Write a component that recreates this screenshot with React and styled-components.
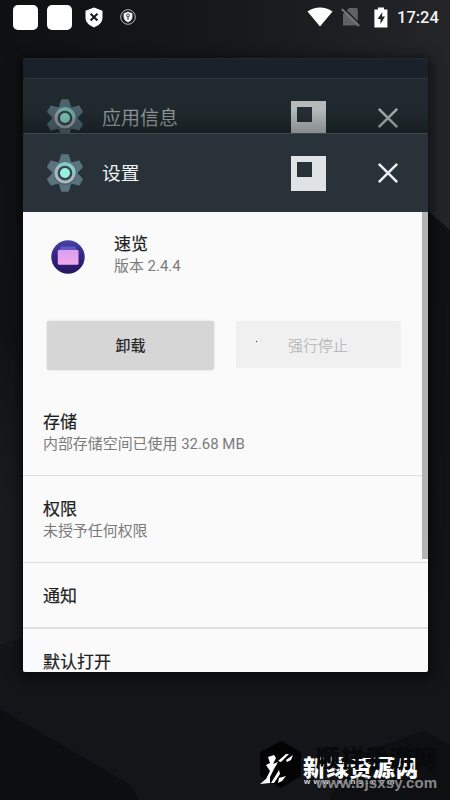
import React from "react";
import styled, { createGlobalStyle } from "styled-components";

const Global = createGlobalStyle`
  * { box-sizing: border-box; }
  html, body { margin: 0; padding: 0; background: #101114; }
  body { font-family: Roboto, "Noto Sans CJK SC", sans-serif; }
  svg { display: block; flex: none; }
`;

const Screen = styled.main`
  position: relative;
  width: 450px;
  height: 800px;
  overflow: hidden;
  display: flex;
  flex-direction: column;
  background: #111316;
`;

const Wallpaper = styled.svg`
  position: absolute;
  inset: 0;
`;

const StatusBar = styled.header`
  position: relative;
  height: 57.5px;
  padding: 4px 11px 0 13px;
  display: flex;
  align-items: flex-start;
  justify-content: space-between;
`;

const StatusGroup = styled.div`
  height: 26px;
  display: flex;
  align-items: center;
`;

const AppSquare = styled.span`
  width: 25px;
  height: 25px;
  margin-right: 9px;
  border-radius: 5px;
  background: #fff;
`;

const StatusIcon = styled.svg`
  margin-left: ${(p) => p.$gap || 0}px;
`;

const Clock = styled.time`
  width: 42px;
  margin-left: 9px;
  padding-top: 1px;
  color: #f4f4f4;
  font-size: 16.5px;
  font-weight: 500;
  line-height: 26px;
  white-space: nowrap;
`;

const Stack = styled.section`
  position: relative;
  width: 405px;
  margin: 0 22px 0 22.5px;
  display: flex;
  flex-direction: column;
  box-shadow: 0 3px 12px 4px rgba(0, 0, 0, 0.5);
  border-radius: 2px;
`;

const Card = styled.article`
  height: ${(p) => p.$height}px;
  overflow: hidden;
  background: ${(p) => p.$color};
  border-top: 1px solid ${(p) => p.$edge};
  border-radius: ${(p) => (p.$front ? "2px" : "2px 2px 0 0")};
  position: relative;
`;

const Shade = styled.div`
  position: absolute;
  inset: 0;
  background: linear-gradient(rgba(0, 0, 0, 0) 55%, rgba(0, 0, 0, 0.25));
`;

const CardHeader = styled.div`
  height: 78px;
  padding: 0 29px 0 24px;
  display: flex;
  align-items: center;
  opacity: ${(p) => (p.$dim ? 0.78 : 1)};
`;

const CardTitle = styled.h2`
  flex: 1;
  margin: 2px 0 0 19.5px;
  color: ${(p) => (p.$dim ? "#b4babd" : "#f2f5f6")};
  font-size: ${(p) => (p.$dim ? 19 : 18.7)}px;
  font-weight: 400;
  line-height: 28px;
`;

const PinButton = styled.button`
  width: 34.5px;
  height: 35px;
  margin-right: 51px;
  padding: 6px 0 0 6px;
  display: flex;
  align-items: flex-start;
  border: 0;
  background: #dfe3e5;
`;

const PinHole = styled.span`
  width: 15px;
  height: 15px;
  background: #273138;
`;

const Body = styled.div`
  position: relative;
  height: 460px;
  background: #fafafa;
  overflow: hidden;
`;

const Scrollbar = styled.div`
  position: absolute;
  top: 0;
  right: 0;
  width: 5.5px;
  height: 347px;
  background: #b3b3b3;
`;

const AppInfo = styled.div`
  height: 109px;
  padding: 20px 0 0 28px;
  display: flex;
  gap: 29.5px;
`;

const AppIcon = styled.svg`
  margin-top: 8px;
`;

const Title = styled.h3`
  margin: 0;
  color: #202020;
  font-size: 17px;
  font-weight: 400;
  -webkit-text-stroke: 0.2px #202020;
  line-height: 25px;
`;

const Subtitle = styled.p`
  margin: 0;
  color: #7a7a7a;
  font-size: 14.95px;
  line-height: 19px;
`;

const Actions = styled.div`
  height: 81px;
  padding: 0 26px 0 24.5px;
  display: flex;
  gap: 22px;
  align-items: flex-start;
`;

const Action = styled.button`
  position: relative;
  width: ${(p) => (p.$off ? 165 : 167)}px;
  height: ${(p) => (p.$off ? 47 : 49)}px;
  padding: ${(p) => (p.$off ? "2px 1px 0 0" : "1px 0 0")};
  border: 0;
  border-radius: 2px;
  background: ${(p) => (p.$off ? "#f0f0f0" : "#d6d6d6")};
  box-shadow: ${(p) => (p.$off ? "none" : "0 0 2px rgba(0,0,0,0.18)")};
  color: ${(p) => (p.$off ? "#bcbcbc" : "#282828")};
  font: ${(p) => (p.$off ? 400 : 500)} 15px/24px Roboto, "Noto Sans CJK SC", sans-serif;
`;

const Speck = styled.i`
  position: absolute;
  left: 20px;
  top: 20px;
  width: 1px;
  height: 1px;
  background: #333;
`;

const Row = styled.div`
  height: ${(p) => p.$height}px;
  padding: ${(p) => p.$top}px 0 0 20.5px;
  border-bottom: ${(p) => p.$line || 1}px solid #dedede;
`;

const Watermark = styled.div`
  position: absolute;
  left: 257px;
  top: 738px;
  width: 188px;
  height: 60px;
`;

const WatermarkLogo = styled.svg`
  position: absolute;
  left: 0;
  top: 0;
`;

const WatermarkText = styled.span`
  position: absolute;
  left: ${(p) => p.$x}px;
  top: ${(p) => p.$y}px;
  color: ${(p) => p.$color};
  font-family: "Liberation Sans", "Noto Sans CJK SC", sans-serif;
  font-size: ${(p) => p.$size}px;
  font-weight: ${(p) => p.$weight || 700};
  letter-spacing: ${(p) => p.$spacing || 0}px;
  line-height: 1.2;
  white-space: nowrap;
`;

function Gear() {
  return (
    <svg width="36" height="38" viewBox="0 0 36 38">
      <g fill="#5a737e">
        {[0, 60, 120, 180, 240, 300].map((a) => (
          <path key={a} d="M14.6 0.8h6.8l2.4 8h-11.6z" transform={`rotate(${a} 18 19)`} stroke="#5a737e" strokeLinejoin="round" />
        ))}
        <circle cx="18" cy="19" r="12.6" />
      </g>
      <circle cx="18" cy="20" r="11" fill="#48606b" />
      <circle cx="18" cy="19" r="9" fill="#37474f" stroke="#a9b7c1" strokeWidth="3.2" />
      <path d="M12.2 12.1A9 9 0 0 1 27 19" fill="none" stroke="#83cfc8" strokeWidth="3.2" />
      <circle cx="18" cy="19" r="5" fill="#96f1df" />
    </svg>
  );
}

function Close({ dim }) {
  return (
    <svg width="22" height="22" viewBox="0 0 22 22">
      <path d="M1.8 1.8l18.4 18.4M20.2 1.8L1.8 20.2" stroke={dim ? "#ccd0d2" : "#e8ecee"} strokeWidth="2.6" />
    </svg>
  );
}

function TaskHeader({ title, dim }) {
  return (
    <CardHeader $dim={dim}>
      <Gear />
      <CardTitle $dim={dim}>{title}</CardTitle>
      <PinButton aria-label="pin">
        <PinHole />
      </PinButton>
      <Close dim={dim} />
    </CardHeader>
  );
}

export default function App() {
  return (
    <Screen>
      <Global />
      <Wallpaper width="450" height="800" viewBox="0 0 450 800">
        <defs>
          <linearGradient id="base" x1="0" y1="0" x2="1" y2="0">
            <stop offset="0" stopColor="#0f1011" />
            <stop offset="0.5" stopColor="#17181a" />
            <stop offset="1" stopColor="#242529" />
          </linearGradient>
          <linearGradient id="lower" x1="0" y1="0" x2="0" y2="1">
            <stop offset="0" stopColor="#0e1012" />
            <stop offset="0.75" stopColor="#121416" />
            <stop offset="1" stopColor="#15161a" />
          </linearGradient>
          <linearGradient id="side" x1="0" y1="0" x2="0" y2="1">
            <stop offset="0" stopColor="#191b1d" stopOpacity="0" />
            <stop offset="0.6" stopColor="#191b1d" />
          </linearGradient>
        </defs>
        <path d="M0 0h450v800H0z" fill="url(#base)" />
        <path d="M0 165L22 200H415L450 230V800H0z" fill="url(#lower)" />
        <path d="M0 330h22v308L0 645z" fill="url(#side)" />
        <path d="M0 645l22-7 200 34h228v128H0z" fill="#131518" />
        <path d="M0 709l131 76 8 15H0z" fill="#0d0e10" />
        <path d="M345 760l78-29 27 14v55H330z" fill="#0e0f11" />
      </Wallpaper>
      <StatusBar>
        <StatusGroup>
          <AppSquare />
          <AppSquare />
          <StatusIcon $gap={3} width="20" height="21" viewBox="0 0 20 21">
            <path d="M10 0.5l8.5 3.3v6.8c0 4.7-3.6 8-8.5 9.9-4.9-1.9-8.5-5.2-8.5-9.9V3.8z" fill="#fff" />
            <path d="M6.6 6.7l6.8 6.8M13.4 6.7l-6.8 6.8" stroke="#17191b" strokeWidth="2" />
          </StatusIcon>
          <StatusIcon $gap={15} width="18" height="18" viewBox="0 0 18 18">
            <circle cx="9" cy="9" r="7.3" fill="#17191b" stroke="#b9b9b9" strokeWidth="1" />
            <path d="M9 3.7l4.4 1.5v3.7c0 2.6-2 4.3-4.4 5.4-2.4-1.1-4.4-2.8-4.4-5.4V5.2z" fill="#f3f3f3" />
            <circle cx="9" cy="7.4" r="1.5" fill="#ddd" stroke="#333" strokeWidth="0.8" />
            <path d="M9 9v2.7" stroke="#333" strokeWidth="1" />
          </StatusIcon>
        </StatusGroup>
        <StatusGroup>
          <StatusIcon width="26" height="20" viewBox="0 0 26 20">
            <path d="M0.5 4.6C8-1 18-1 25.5 4.6L13 19.5z" fill="#fff" />
          </StatusIcon>
          <StatusIcon $gap={8} width="20" height="20" viewBox="0 0 20 20">
            <path d="M8 1h7q1.8 0 1.8 1.8V18.5H2V7z" fill="#606164" />
            <path d="M2.2 0.8l17.4 17" stroke="#1b1c1e" strokeWidth="1.4" />
            <path d="M0.8 2l17.4 17" stroke="#77787b" strokeWidth="1.8" />
          </StatusIcon>
          <StatusIcon $gap={13} width="14" height="21" viewBox="0 0 14 21">
            <path d="M4 0.5h6v2h3.4V20.5H0.4V2.5H4z" fill="#fff" />
            <path d="M8.4 5L3.5 12h3v5L11 9.6H8z" fill="#222427" />
          </StatusIcon>
          <Clock>17:24</Clock>
        </StatusGroup>
      </StatusBar>

      <Stack>
        <Card $height={20.5} $color="#19222a" $edge="#202b31" />
        <Card $height={55} $color="#20292e" $edge="#2c393d">
          <TaskHeader title="应用信息" dim />
          <Shade />
        </Card>
        <Card $height={539} $color="#283238" $edge="#3a494e" $front>
          <TaskHeader title="设置" />
          <Body>
            <AppInfo>
              <AppIcon width="34" height="34" viewBox="0 0 34 34">
                <defs>
                  <linearGradient id="app" x1="0" y1="0" x2="0" y2="1">
                    <stop offset="0" stopColor="#4545a6" />
                    <stop offset="0.45" stopColor="#352483" />
                    <stop offset="1" stopColor="#251762" />
                  </linearGradient>
                  <linearGradient id="folder" x1="0" y1="0" x2="0" y2="1">
                    <stop offset="0" stopColor="#d8a0f0" />
                    <stop offset="1" stopColor="#f2aaea" />
                  </linearGradient>
                </defs>
                <circle cx="17" cy="17" r="16.7" fill="url(#app)" />
                <path d="M10 6.5h14l2 4H8z" fill="#6058c4" />
                <rect x="6.8" y="10" width="20.7" height="14.8" rx="1.2" fill="url(#folder)" />
              </AppIcon>
              <div>
                <Title>速览</Title>
                <Subtitle>版本 2.4.4</Subtitle>
              </div>
            </AppInfo>
            <Actions>
              <Action>卸载</Action>
              <Action $off>
                强行停止
                <Speck />
              </Action>
            </Actions>
            <Row $height={73.5} $top={8}>
              <Title>存储</Title>
              <Subtitle>内部存储空间已使用 32.68 MB</Subtitle>
            </Row>
            <Row $height={87} $top={21}>
              <Title>权限</Title>
              <Subtitle>未授予任何权限</Subtitle>
            </Row>
            <Row $height={66.5} $top={21} $line={2}>
              <Title>通知</Title>
            </Row>
            <Row $height={66} $top={20.5}>
              <Title>默认打开</Title>
            </Row>
            <Scrollbar />
          </Body>
        </Card>
      </Stack>

      <Watermark>
        <WatermarkLogo width="52" height="56" viewBox="0 0 52 56">
          <path d="M24 3l20 11v24L24 50 3 38V14z" fill="#030304" />
          <path d="M11 19l6-2 2 3-3 6 5-2-4 7-4 8v6l-10 1 6-5 4-8-4-6 4-2z" fill="#fff" />
          <path d="M21 23l8-7h3l-8 8zM29 22l7-5-2 5-4 2z" fill="#fff" />
          <path d="M14 45l8-13 1 4-4 6-2 3zM22 40l7-2-4 5-4 2z" fill="#fff" />
        </WatermarkLogo>
        <WatermarkText $x={46} $y={16.5} $size={22.5} $weight={900} $spacing={0.7} $color="#fff">新绿资源网</WatermarkText>
        <WatermarkText $x={47} $y={39} $size={8} $spacing={3.2} $color="#ddd">www.xlhs.com</WatermarkText>
        <WatermarkText $x={59} $y={7} $size={24} $weight={900} $spacing={0.4} $color="#08090a">顺祥手游网</WatermarkText>
        <WatermarkText $x={59} $y={36} $size={15} $spacing={0.15} $color="#87888a">www.bjsxsy.com</WatermarkText>
      </Watermark>
    </Screen>
  );
}
